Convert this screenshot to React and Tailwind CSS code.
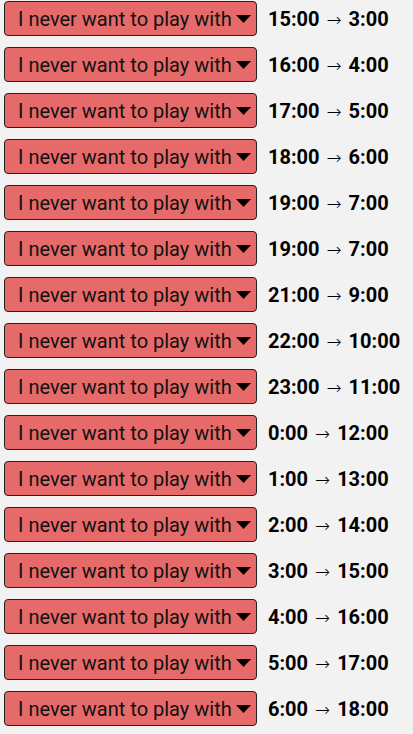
import React from "react";

// Each row: a "never play with" picker and the shifted time range
const SHIFTS = [
  ["15:00", "3:00"],
  ["16:00", "4:00"],
  ["17:00", "5:00"],
  ["18:00", "6:00"],
  ["19:00", "7:00"],
  ["19:00", "7:00"],
  ["21:00", "9:00"],
  ["22:00", "10:00"],
  ["23:00", "11:00"],
  ["0:00", "12:00"],
  ["1:00", "13:00"],
  ["2:00", "14:00"],
  ["3:00", "15:00"],
  ["4:00", "16:00"],
  ["5:00", "17:00"],
  ["6:00", "18:00"],
];

function Picker() {
  return (
    <div className="flex items-center w-[253px] h-[35px] shrink-0 rounded-[4px] border border-[#222] bg-[#e66a6a] pl-[13px] pr-[5px] overflow-hidden">
      <span className="flex-1 text-[20px] text-[#111] whitespace-nowrap overflow-hidden">
        I never want to play with
      </span>
      <svg width="15" height="8" viewBox="0 0 15 8" className="shrink-0 ml-[2px]">
        <path d="M0 0 H15 L7.5 8 Z" fill="#000" />
      </svg>
    </div>
  );
}

export default function App() {
  return (
    <div
      className="min-h-screen bg-[#f2f2f2] pt-[1px] pl-[4px] flex flex-col gap-[11px]"
      style={{ fontFamily: "Roboto, 'Liberation Sans', sans-serif" }}
    >
      {SHIFTS.map(([from, to], i) => (
        <div key={i} className="flex items-center gap-[11px]">
          <Picker />
          <span className="text-[20px] font-bold text-black whitespace-nowrap">
            {from}{" "}
            <span className="mx-[2px] font-light text-[18px] font-['DejaVu_Sans']">→</span>{" "}
            {to}
          </span>
        </div>
      ))}
    </div>
  );
}
